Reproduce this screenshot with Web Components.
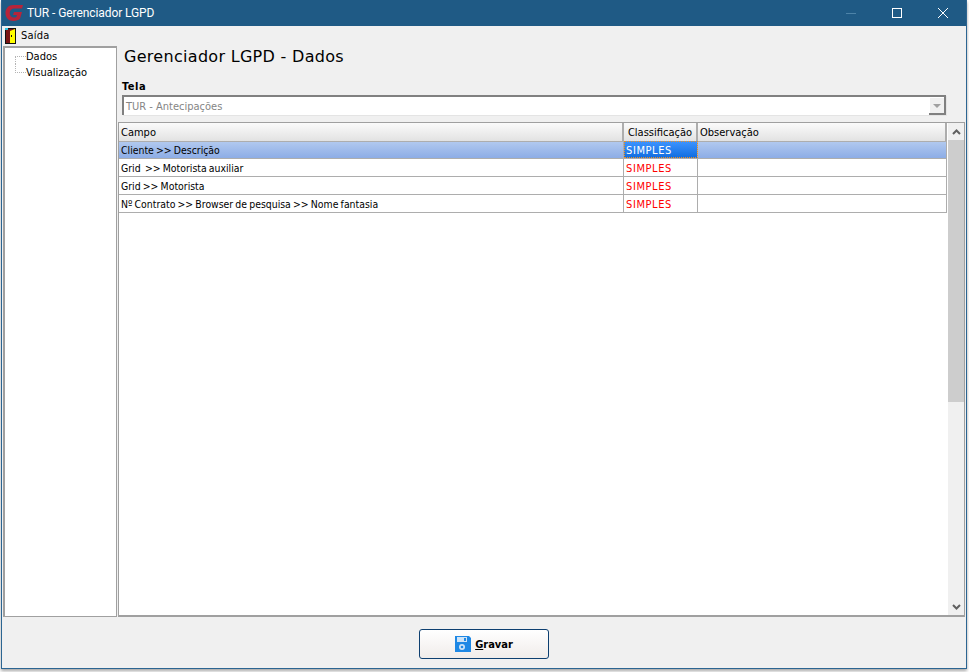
<!DOCTYPE html>
<html>
<head>
<meta charset="utf-8">
<title>TUR - Gerenciador LGPD</title>
<style>
  html, body { margin: 0; height: 100%; background: #fff; }
  body { font: 11px "DejaVu Sans Condensed", "DejaVu Sans", sans-serif; color: #000; overflow: hidden; }
</style>
</head>
<body>
<app-window>
  <title-bar slot="title">TUR - Gerenciador LGPD</title-bar>
  <menu-bar slot="menu">Saída</menu-bar>
  <tree-panel slot="tree">
    <tree-item>Dados</tree-item>
    <tree-item>Visualização</tree-item>
  </tree-panel>
  <h1 slot="heading">Gerenciador LGPD - Dados</h1>
  <combo-box slot="form" label="Tela" value="TUR - Antecipações"></combo-box>
  <data-grid slot="form">
    <grid-row campo="Cliente &gt;&gt; Descrição" selected></grid-row>
    <grid-row campo="Grid  &gt;&gt; Motorista auxiliar"></grid-row>
    <grid-row campo="Grid &gt;&gt; Motorista"></grid-row>
    <grid-row campo="Nº Contrato &gt;&gt; Browser de pesquisa &gt;&gt; Nome fantasia"></grid-row>
  </data-grid>
  <save-button slot="footer">Gravar</save-button>
</app-window>

<script>
  function define(name, html) {
    const template = document.createElement("template");
    template.innerHTML = html;
    customElements.define(
      name,
      class extends HTMLElement {
        connectedCallback() {
          if (this.shadowRoot) return;
          this.attachShadow({ mode: "open" });
          this.shadowRoot.appendChild(template.content.cloneNode(true));
          this.shadowRoot.querySelectorAll("[data-attr]").forEach((node) => {
            node.textContent = this.getAttribute(node.dataset.attr);
          });
        }
      }
    );
  }

  define("app-window", `
    <style>
      :host {
        display: flex;
        flex-direction: column;
        box-sizing: border-box;
        width: 966px;
        height: 669px;
        margin-left: 1px;
        background: #f0f0f0;
        border: solid #2c6592;
        border-width: 0 1px 1px 1px;
        box-shadow: 0 2px 3px rgba(0, 0, 0, 0.35);
      }
      .body {
        flex: 1;
        min-height: 0;
        display: flex;
        gap: 1px;
        padding: 1px 1px 0 1px;
      }
      .main {
        flex: 1;
        min-width: 0;
        display: flex;
        flex-direction: column;
      }
      .head {
        padding: 1px 0 0 6px;
        height: 32px;
      }
      ::slotted(h1) {
        margin: 0;
        font: 400 16px/20px "DejaVu Sans", sans-serif;
        letter-spacing: 0.3px;
      }
      .form {
        flex: 1;
        min-height: 0;
        display: flex;
        flex-direction: column;
      }
      .foot {
        height: 51px;
        display: flex;
        justify-content: center;
        align-items: flex-start;
        padding-top: 12px;
        box-sizing: border-box;
      }
    </style>
    <slot name="title"></slot>
    <slot name="menu"></slot>
    <div class="body">
      <slot name="tree"></slot>
      <div class="main">
        <div class="head"><slot name="heading"></slot></div>
        <div class="form"><slot name="form"></slot></div>
      </div>
    </div>
    <div class="foot"><slot name="footer"></slot></div>
  `);

  define("title-bar", `
    <style>
      :host {
        display: flex;
        align-items: center;
        height: 26px;
        flex: none;
        background: #1f5a85;
        color: #fff;
        font: 12px Roboto, sans-serif;
        letter-spacing: -0.08px;
      }
      svg.logo { margin: 0 3px 0 3px; flex: none; }
      .text { flex: 1; }
      .btns { display: flex; height: 26px; }
      .btn { width: 46px; display: flex; align-items: center; justify-content: center; }
    </style>
    <svg class="logo" width="19" height="18" viewBox="0 0 19 18">
      <path d="M18 1H8.500C3.500 1 .5 4.500 .5 9c0 4.500 3 8 8 8 2.800 0 5-.9 6.500-2.200L17 8H9L8 11h4l-.6 2c-.7.4-1.600.6-2.600.6-2.500 0-4.100-1.900-4.100-4.600 0-2.800 2-4.600 4.500-4.600H17z" fill="#b8243a"/>
    </svg>
    <span class="text"><slot></slot></span>
    <div class="btns">
      <div class="btn">
        <svg width="10" height="10"><path d="M0 5.500H10" stroke="#4d83a8" stroke-width="1"/></svg>
      </div>
      <div class="btn">
        <svg width="10" height="10"><rect x=".5" y=".5" width="9" height="9" fill="none" stroke="#fff"/></svg>
      </div>
      <div class="btn">
        <svg width="10" height="10"><path d="M0 0L10 10M10 0L0 10" stroke="#fff" stroke-width="1"/></svg>
      </div>
    </div>
  `);

  define("menu-bar", `
    <style>
      :host {
        display: flex;
        align-items: center;
        gap: 5px;
        height: 19px;
        flex: none;
        padding-left: 3px;
        font: 11px "DejaVu Sans Condensed", "DejaVu Sans", sans-serif;
        letter-spacing: 0.2px;
      }
    </style>
    <svg width="11" height="16" viewBox="0 0 11 16">
      <rect width="11" height="16" fill="#111"/>
      <rect x="1" y="1" width="9" height="14" fill="#7a1414"/>
      <path d="M5 3L10 1V15H5z" fill="#ffff00"/>
      <rect x="0" y="0" width="3" height="2" fill="#30c0e0"/>
      <rect x="6" y="7" width="1" height="2" fill="#111"/>
    </svg>
    <slot></slot>
  `);

  define("tree-panel", `
    <style>
      :host {
        display: block;
        box-sizing: border-box;
        width: 114px;
        flex: none;
        background: #fff;
        border: 1px solid #a0a0a0;
        border-top-width: 2px;
        border-left-width: 2px;
      }
    </style>
    <slot></slot>
  `);

  define("tree-item", `
    <style>
      :host {
        display: flex;
        height: 16px;
        padding-left: 10px;
        font: 11px/18px "DejaVu Sans Condensed", "DejaVu Sans", sans-serif;
      }
      i {
        box-sizing: border-box;
        width: 11px;
        height: 9px;
        flex: none;
        border-left: 1px dotted #b4b4b4;
        border-bottom: 1px dotted #b4b4b4;
      }
      :host(:first-child) i {
        align-self: flex-end;
        height: 8px;
        border-bottom: 0;
        border-top: 1px dotted #b4b4b4;
      }
    </style>
    <i></i><slot></slot>
  `);

  define("combo-box", `
    <style>
      :host {
        display: block;
        padding-left: 4px;
        margin-right: 19px;
        flex: none;
        margin-bottom: 7px;
      }
      label {
        display: block;
        font: bold 11px/16px "DejaVu Sans Condensed", "DejaVu Sans", sans-serif;
        letter-spacing: 0.5px;
        height: 14px;
        margin-bottom: 2px;
      }
      .box {
        display: flex;
        align-items: center;
        box-sizing: border-box;
        height: 20px;
        background: #fff;
        border: solid #808080;
        border-width: 2px 0 0 2px;
        box-shadow: 1px 1px 0 #e4e4e4;
        color: #858585;
        font: 11px "DejaVu Sans Condensed", "DejaVu Sans", sans-serif;
        padding-left: 2px;
      }
      .val { flex: 1; }
      .arrow {
        width: 17px;
        height: 18px;
        box-sizing: border-box;
        background: #f0f0f0;
        border: solid #808080;
        border-width: 0 1px 1px 0;
        box-shadow: inset -1px -1px 0 #808080, inset 1px 1px 0 #fff;
        display: flex;
        align-items: center;
        justify-content: center;
      }
      .arrow i {
        border: 4px solid transparent;
        border-top: 4px solid #a0a0a0;
        border-bottom: 0;
        width: 0;
        height: 0;
      }
    </style>
    <label data-attr="label"></label>
    <div class="box"><span class="val" data-attr="value"></span><span class="arrow"><i></i></span></div>
  `);

  define("data-grid", `
    <style>
      :host {
        display: flex;
        flex: 1;
        min-height: 0;
        box-sizing: border-box;
        background: #fff;
        border: 1px solid #a0a0a0;
        border-bottom-width: 2px;
        font: 11px "DejaVu Sans Condensed", "DejaVu Sans", sans-serif;
      }
      .table { flex: 1; min-width: 0; }
      .head {
        display: grid;
        grid-template-columns: 505px 74px 1fr;
        height: 18px;
      }
      .head div {
        box-sizing: border-box;
        padding: 2px 0 0 2px;
        line-height: 16px;
        background: linear-gradient(#fbfbfb, #e2e2e2);
        border-right: 2px solid #adadad;
        border-bottom: 1px solid #adadad;
      }
      .head div:nth-child(2) { text-align: center; padding-left: 0; }
      .bar {
        width: 16px;
        flex: none;
        display: flex;
        flex-direction: column;
        background: #f0f0f0;
        margin-left: 1px;
      }
      .bar span { height: 17px; display: flex; align-items: center; justify-content: center; flex: none; }
      .thumb { height: 262px; background: #cdcdcd; flex: none; }
      .rest { flex: 1; }
    </style>
    <div class="table">
      <div class="head"><div>Campo</div><div>Classificação</div><div>Observação</div></div>
      <slot></slot>
    </div>
    <div class="bar">
      <span><svg width="9" height="6"><path d="M1 5L4.500 1.500L8 5" fill="none" stroke="#606060" stroke-width="2"/></svg></span>
      <div class="thumb"></div>
      <div class="rest"></div>
      <span><svg width="9" height="6"><path d="M1 1L4.500 4.500L8 1" fill="none" stroke="#606060" stroke-width="2"/></svg></span>
    </div>
  `);

  define("grid-row", `
    <style>
      :host {
        display: grid;
        grid-template-columns: 505px 74px 1fr;
        height: 18px;
        box-sizing: border-box;
        border-bottom: 1px solid #adadad;
        border-right: 1px solid #adadad;
      }
      :host([selected]) {
        background: linear-gradient(#b3caef, #8dade6);
      }
      div {
        box-sizing: border-box;
        padding: 2px 0 0 2px;
        line-height: 15px;
        white-space: pre;
        border-right: 1px solid #adadad;
      }
      div:last-child { border-right: 0; }
      .campo { font-size: 10.4px; word-spacing: -0.8px; }
      .cls { color: #f00; letter-spacing: 0.6px; }
      :host([selected]) .cls {
        color: #fff;
        background: linear-gradient(#3f95ff, #0f6ce0);
        outline: 1px dotted #f09020;
        outline-offset: -1px;
      }
    </style>
    <div class="campo" data-attr="campo"></div>
    <div class="cls">SIMPLES</div>
    <div></div>
  `);

  define("save-button", `
    <style>
      :host {
        display: flex;
        align-items: center;
        justify-content: center;
        gap: 4px;
        box-sizing: border-box;
        width: 130px;
        height: 30px;
        border: 1px solid #0d3f70;
        border-radius: 3px;
        background: linear-gradient(#fff, #f0ecea);
        font: bold 11px "DejaVu Sans Condensed", "DejaVu Sans", sans-serif;
      }
      .t::first-letter { text-decoration: underline; }
      .t { display: inline-block; }
    </style>
    <svg width="16" height="16" viewBox="0 0 16 16">
      <path d="M0 0H14L16 2V16H0z" fill="#1e88e5"/>
      <rect x="2" y="1" width="10" height="5" fill="#cfe4f7"/>
      <rect x="9" y="2" width="2" height="3" fill="#1e88e5"/>
      <circle cx="7" cy="11" r="3" fill="#cfe4f7"/>
      <circle cx="7" cy="11" r="1.300" fill="#1e88e5"/>
    </svg>
    <span class="t"><slot></slot></span>
  `);
</script>
</body>
</html>
